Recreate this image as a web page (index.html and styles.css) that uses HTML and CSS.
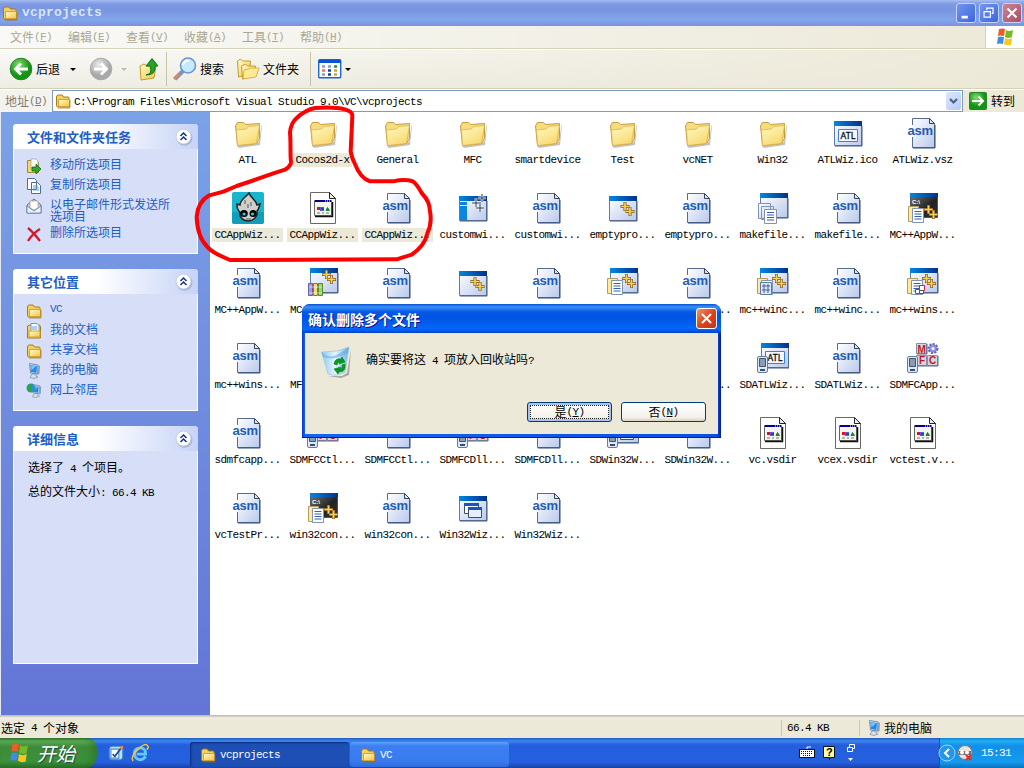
FILE: index.html
```html
<!DOCTYPE html>
<html lang="zh-CN">
<head>
<meta charset="utf-8">
<title>vcprojects</title>
<link rel="stylesheet" href="styles.css">
</head>
<body>
<svg class="defs" width="0" height="0">
<defs>
<linearGradient id="gy" x1="0" y1="0" x2="1" y2="1"><stop offset="0" stop-color="#fffbd0"/><stop offset="1" stop-color="#f0c540"/></linearGradient>
<linearGradient id="gf" x1="0" y1="0" x2=".6" y2="1"><stop offset="0" stop-color="#fffbc8"/><stop offset="1" stop-color="#f8d970"/></linearGradient>
<linearGradient id="gw" x1="0" y1="0" x2="1" y2="1"><stop offset="0" stop-color="#fff"/><stop offset="1" stop-color="#b9c9ec"/></linearGradient>
<linearGradient id="gt"><stop offset="0" stop-color="#0088e0"/><stop offset="1" stop-color="#00308c"/></linearGradient>
<linearGradient id="gc" x1="0" y1="0" x2="1" y2="1"><stop offset="0" stop-color="#777"/><stop offset=".6" stop-color="#222"/><stop offset="1" stop-color="#333"/></linearGradient>
<linearGradient id="gb" x1="0" y1="0" x2="1" y2="0"><stop offset="0" stop-color="#8ac8f4"/><stop offset=".5" stop-color="#e4f6ff"/><stop offset="1" stop-color="#6fb2e4"/></linearGradient>
<radialGradient id="gg" cx=".4" cy=".3"><stop offset="0" stop-color="#86dc70"/><stop offset="1" stop-color="#149414"/></radialGradient>
<radialGradient id="gs" cx=".4" cy=".3"><stop offset="0" stop-color="#ececec"/><stop offset="1" stop-color="#a8a8a8"/></radialGradient>
<symbol id="folder" viewBox="0 0 32 32"><path d="M5 29l22-4 2.500-17 .5 1-2 19-21 3z" fill="#777" opacity=".45"/><path d="M3.500 9l2-3.500h6l2 2 14-1v15l-3 5-19 2z" fill="#f5dc7c" stroke="#c79c3e"/><path d="M4.500 13l10-1 2-2.500 11-1-3 18-19 2z" fill="url(#gf)" stroke="#dcae45" stroke-width=".7"/></symbol>
<symbol id="asm" viewBox="0 0 32 32"><path d="M5.500 1.500h17l5 5v24h-22z" fill="url(#gw)" stroke="#566b8d"/><path d="M6 31h22V8" fill="none" stroke="#344d7a"/><path d="M22.500 1.500v5h5z" fill="#dce5f5" stroke="#344460"/><path d="M5.500 8v12" stroke="#fff"/><text x=".5" y="18" class="asm-text" textLength="25.500">asm</text></symbol>
<symbol id="frame" viewBox="0 0 32 32"><path d="M2.500 4.500h27v24h-27z" fill="url(#gw)" stroke="#647b9d"/><path d="M2 4h28v5H2z" fill="url(#gt)"/><path d="M3 29h27V9" fill="none" stroke="#425b84"/></symbol>
<symbol id="plus" viewBox="0 0 16 16"><path d="M5.500 1v9M1 5.500h9M10.500 6v9M6 10.500h9" stroke="#80571a" stroke-width="3"/><path d="M5.500 1.500v8M1.500 5.500h8M10.500 6.500v8M6.500 10.500h8" stroke="#f9cf55" stroke-width="1.700"/></symbol>
<symbol id="page" viewBox="0 0 16 18"><path d="M.5.5h10v15H.5z" fill="#ffe99c" stroke="#b39d61"/><path d="M4.500 2.500h11v14h-11z" fill="#fff" stroke="#8094b2"/><path d="M6.500 5.500h7m-7 2.500h7m-7 2.500h7m-7 2.500h7" stroke="#325fb0"/></symbol>
<symbol id="win" viewBox="0 0 32 32"><use href="#frame"/><use href="#plus" x="12.500" y="9" width="16" height="16"/></symbol>
<symbol id="custom" viewBox="0 0 32 32"><use href="#frame"/><path d="M3 10h7v3H3zm0 4h7v14H3z" fill="#0786e6"/><path d="M19 6v9m-4-4h9M25 2v8m-4-4h8m-6 6v8m-4-4h8" stroke="#fff" stroke-width="2.500"/><path d="M19 6v9m-4-4h9M25 2v8m-4-4h8m-6 6v8m-4-4h8" stroke="#283650"/></symbol>
<symbol id="atl" viewBox="0 0 32 32"><use href="#frame"/><path d="M6.500 12.500h19v12h-19z" fill="#f5f9ff" stroke="#3681e4"/><text x="8.500" y="22" class="atl-text" textLength="15">ATL</text></symbol>
<symbol id="make" viewBox="0 0 32 32"><use href="#frame" x="1" y="-3"/><path d="M1.500 11.500h12v15h-12zm3 3h12v13h-12z" fill="url(#gw)" stroke="#8094b2"/><path d="M7.500 17.500h12v14h-12z" fill="#fff" stroke="#8094b2"/><path d="M10 20.500h7m-7 2.500h7m-7 2.500h7m-7 2.500h7" stroke="#325fb0"/></symbol>
<symbol id="console" viewBox="0 0 32 32"><path d="M3.500 1.500h27v24h-27z" fill="url(#gc)" stroke="#555"/><path d="M3 1h28v4H3z" fill="url(#gt)"/><text x="5" y="12" class="tiny-text">C:\</text><use href="#plus" x="16" y="12" width="16" height="16"/><use href="#page" x="1" y="14" width="16" height="18"/></symbol>
<symbol id="docs" viewBox="0 0 32 32"><use href="#frame" x="1" y="-3"/><use href="#plus" x="14" y="6" width="16" height="16"/><use href="#page" x="0" y="11" width="16" height="18"/></symbol>
<symbol id="form" viewBox="0 0 32 32"><use href="#docs"/><path d="M3.500 15.500h11v12h-11z" fill="#dce7fa" stroke="#61799e"/><path d="M5 19h8M5 23h8M7 17v9m4-9v9" stroke="#426394"/></symbol>
<symbol id="service" viewBox="0 0 32 32"><use href="#docs"/><path d="M12.500 18.500h5v5h-5z" fill="#fff" stroke="#d02040"/><path d="M8.500 22.500h4v4h-4z" fill="#fff" stroke="#208430"/><path d="M12.500 23.500h4v3h-4z" fill="#fff" stroke="#555"/></symbol>
<symbol id="books" viewBox="0 0 32 32"><use href="#frame" x="1" y="-3"/><use href="#plus" x="14" y="2" width="16" height="16"/><path d="M1.500 16.500h4v12h-4z" fill="#a79bdd" stroke="#6b5d9e"/><path d="M6.500 16.500h4v12h-4z" fill="#f7d875" stroke="#92742c"/><path d="M11.500 16.500h4v12h-4z" fill="#97d667" stroke="#548b32"/><path d="M2 20h13M2 26h13" stroke="#fff" opacity=".6"/></symbol>
<symbol id="phone" viewBox="0 0 12 18"><rect x=".5" y=".5" width="10" height="16" rx="1.500" fill="#dfe8f6" stroke="#657d9c"/><path d="M2.500 2.500h6v8h-6z" fill="#879cb5" stroke="#46546a"/><path d="M3 14h5" stroke="#384f72" stroke-width="2"/></symbol>
<symbol id="sdatl" viewBox="0 0 32 32"><use href="#atl" x="2" y="-3"/><use href="#phone" x="0" y="14" width="12" height="18"/></symbol>
<symbol id="mfc" viewBox="0 0 32 32"><path d="M9.500 1.500h10v10h-10zm0 12h10v10h-10zm11 0h10v10h-10z" fill="#d3d8e2" stroke="#8290a8"/><path d="M10 12h10V2M10 24h21V14" fill="none" stroke="#5c6983"/><g class="mfc-text"><text x="10.500" y="10.500">M</text><text x="12" y="22">F</text><text x="22" y="22">C</text></g><circle cx="26" cy="6.500" r="4" fill="#8d91df" stroke="#6568bd" stroke-width="3" stroke-dasharray="2 1"/><circle cx="26" cy="6.500" r="3.500" fill="#8d91df"/><circle cx="26" cy="6.500" r="1.500" fill="#fff"/><use href="#phone" x="0" y="14" width="12" height="18"/></symbol>
<symbol id="windows" viewBox="0 0 32 32"><use href="#frame"/><path d="M7.500 11.500h14v10h-14z" fill="#fff" stroke="#365174"/><path d="M7 11h15v3H7z" fill="#1555bd"/><path d="M11.500 15.500h13v10h-13z" fill="#e7effb" stroke="#365174"/><path d="M11 15h14v3H11z" fill="#1555bd"/></symbol>
<symbol id="sdwin" viewBox="0 0 32 32"><use href="#windows" x="2" y="-3"/><use href="#phone" x="0" y="14" width="12" height="18"/></symbol>
<symbol id="vsdir" viewBox="0 0 32 32"><path d="M3.500.5h19l6 6v25h-25z" fill="#fff" stroke="#6a6a65"/><path d="M22.500.5v6h6z" fill="#eee" stroke="#222"/><path d="M7.500 8.500h17v15h-17z" fill="#f4f3ee" stroke="#666"/><path d="M8 8h16v2H8z" fill="#000090"/><path d="M18 9h1m1 0h1m1 0h1" stroke="#fff"/><path d="M8 24.500h17.500V10" fill="none" stroke="#111" stroke-width="1.500"/><rect x="10" y="15" width="3" height="3" fill="#e01020"/><path d="M14 15v4m0-2h3m-1-2v4" stroke="#1535d0" stroke-width="1.500"/><path d="M19 18.500l1.500-3 2 3z" fill="#0a8b35" stroke="#0a8b35"/><path d="M10 21h3m2 0h2m2 0h3" stroke="#777"/></symbol>
<symbol id="cocos" viewBox="0 0 32 32"><rect width="32" height="32" rx="2" fill="#18b5cc"/><path d="M0 20h32v10q0 2-2 2H2q-2 0-2-2z" fill="#0f8fae" opacity=".6"/><path d="M17 1c1 4 7 7 8 12l3-1c-1 3-1 5-3 7 1 6-4 10-9 10s-9-4-8-9c-3-2-3-5-3-8l3 1C8 8 13 6 17 1z" fill="#cfcfcb" stroke="#222" stroke-width="1.500"/><ellipse cx="12" cy="21.500" rx="3.800" ry="3.500"/><ellipse cx="21" cy="21.500" rx="3.500" ry="3.500"/><circle cx="12" cy="22" r="1.600" fill="#19d3dc"/><circle cx="20.500" cy="22" r="1.600" fill="#19d3dc"/><path d="M14 27h5m-6-19v4m6-2v4m-3-2v4" stroke="#555"/></symbol>
<symbol id="sfolder" viewBox="0 0 16 16"><path d="M1.500 4q0-2 2-2h3.500l1.500 2h4.500q1 0 1 1v9H3q-1.500 0-1.500-1.500z" fill="#f7d15b" stroke="#a77a17"/><path d="M3.500 6.500h11v7h-11z" fill="url(#gy)" stroke="#d8a32e"/><path d="M3 15h12V7" fill="none" stroke="#8e6a22" stroke-width=".7"/></symbol>
<symbol id="pc" viewBox="0 0 16 16"><path d="M3.500.5l8.500 1.500-.5 9-7-1z" fill="#dce7f8" stroke="#788cae"/><path d="M4.500 2l6.500 1-.5 7-5.500-1z" fill="#1e8cec"/><path d="M5 2.500l5 .8-4.500 4z" fill="#7cc4fb"/><path d="M12 2l2 1-.5 8-2 1" fill="#8f9fba"/><path d="M6 11h4v2l2 1-4 1.500-4-1z" fill="#d8dfec" stroke="#77869e" stroke-width=".7"/></symbol>
<symbol id="flag" viewBox="0 0 20 18"><path d="M4 1q3-1 6 0L9 8q-3-1-6 0z" fill="#ef5b24"/><path d="M11 2q3 2 7 0l-1 7q-4 2-7 0z" fill="#76bb25"/><path d="M3 9q3-1 6 0l-1 7q-3-1-6 0z" fill="#3f8de0"/><path d="M10 10q3 2 7 0l-1 7q-4 1-7-1z" fill="#fac722"/></symbol>
<symbol id="chev" viewBox="0 0 20 20"><circle cx="10.500" cy="10.800" r="8" fill="#9aa6c8" opacity=".7"/><circle cx="9.500" cy="9.500" r="7.500" fill="#fff" stroke="#c3cde6"/><path d="M6.500 9l3-3 3 3m-6 4l3-3 3 3" fill="none" stroke="#15317e" stroke-width="1.500"/></symbol>
</defs>
</svg>

<div class="screen">
<header class="titlebar"><svg class="i16"><use href="#sfolder"/></svg><h1>vcprojects</h1>
<div class="winbtns">
<svg class="wb" viewBox="0 0 20 20"><path d="M5 14.500h7" stroke="#fff" stroke-width="3"/></svg>
<svg class="wb" viewBox="0 0 20 20"><path d="M7.500 7V4.500h7v6H13M4.500 8.500h7v6h-7zM4 8.500h8M7 4.500h8" fill="none" stroke="#fff" stroke-width="1.300"/></svg>
<svg class="wb x" viewBox="0 0 20 20"><path d="M5 5l10 10M15 5L5 15" stroke="#fff" stroke-width="2.300"/></svg>
</div></header>
<nav class="menubar"><span>文件<i>(<u>F</u>)</i></span><span>编辑<i>(<u>E</u>)</i></span><span>查看<i>(<u>V</u>)</i></span><span>收藏<i>(<u>A</u>)</i></span><span>工具<i>(<u>T</u>)</i></span><span>帮助<i>(<u>H</u>)</i></span><div class="brand"><svg width="20" height="18"><use href="#flag"/></svg></div></nav>
<div class="toolbar">
<svg class="back" viewBox="0 0 24 24"><circle cx="12" cy="12" r="10.800" fill="url(#gg)" stroke="#27842a"/><path d="M19 12H7m5-5.500L6.500 12l5.500 5.500" fill="none" stroke="#fff" stroke-width="2.800"/></svg><span class="t1">后退</span><b class="arr"></b>
<svg class="fwd" viewBox="0 0 24 24"><circle cx="12" cy="12" r="10.800" fill="url(#gs)" stroke="#aaa"/><path d="M5 12h12m-5-5.500l5.500 5.500-5.500 5.500" fill="none" stroke="#fff" stroke-width="2.800"/></svg><b class="arr off"></b>
<svg class="up" viewBox="0 0 20 24"><path d="M1 9l4-2 3 2 9 0-2 12-13 2z" fill="url(#gy)" stroke="#c59b31"/><path d="M7 18q7-1 4-9H7L13 1.500 19 9h-3q1 9-9 9z" fill="#26a326" stroke="#0c7414"/></svg>
<hr>
<svg class="search" viewBox="0 0 24 24"><path d="M2 22l8-8" stroke="#8490b5" stroke-width="4"/><path d="M1 22l5-5" stroke="#d68a62" stroke-width="3"/><circle cx="15" cy="8.500" r="7.500" fill="#c3eaff" stroke="#6e94d1" stroke-width="1.600"/><path d="M10 8q1-5 6-4" stroke="#fff" stroke-width="2" fill="none"/></svg><span class="t2">搜索</span>
<svg class="folders" viewBox="0 0 24 24"><path d="M1.500 4l3-2 2 2h8l-1 13-11 3z" fill="url(#gy)" stroke="#c59b31"/><path d="M5.500 9l4-2 2 2h8v10l-13 3z" fill="url(#gy)" stroke="#c59b31"/><path d="M8 13l5-1 1-1h9l-3 9-13 2z" fill="#ffe991" stroke="#d0a53d" stroke-width=".8"/></svg><span class="t3">文件夹</span>
<hr>
<svg class="views" viewBox="0 0 24 20"><rect x=".7" y=".7" width="22" height="18" rx="1" fill="#fff" stroke="#1668ce" stroke-width="1.400"/><path d="M1 1h22v3H1z" fill="#0755d5"/><g stroke-width="2.500"><path d="M4 7.500h3" stroke="#8c9bd9"/><path d="M10 7.500h3M4 15.500h3" stroke="#859bdd"/><path d="M16 7.500h3" stroke="#2a913a"/><path d="M4 11.500h3" stroke="#f1724b"/><path d="M10 11.500h3m-3 4h3" stroke="#1042b1"/><path d="M16 11.500h3m-3 4h3" stroke="#c5a53b"/></g></svg><b class="arr v"></b>
</div>
<div class="address"><span class="albl">地址<i>(<u>D</u>)</i></span><div class="abox"><svg class="i16"><use href="#sfolder"/></svg><span class="mono">C:\Program Files\Microsoft Visual Studio 9.0\VC\vcprojects</span><svg class="drop" viewBox="0 0 15 18"><path d="M4 7l3.500 3.500L11 7" fill="none" stroke="#4d6185" stroke-width="2.200"/></svg></div><svg class="go" viewBox="0 0 18 18"><rect x=".5" y=".5" width="17" height="17" rx="1" fill="url(#gg)" stroke="#248430"/><path d="M3 9h11M9.500 4.500L14 9l-4.500 4.500" fill="none" stroke="#fff" stroke-width="2"/></svg><span>转到</span></div>

<div class="main">
<aside>
<section class="box b1"><h2>文件和文件夹任务<svg><use href="#chev"/></svg></h2><ul>
<li><svg viewBox="0 0 16 16"><path d="M1.500 2.500h5l1 2h5v10h-11z" fill="#f4d671" stroke="#a98733"/><path d="M5 1h5l2 2v7H5z" fill="#fff" stroke="#9a9a9a" stroke-width=".7"/><path d="M6 9h4V6l5 5-5 5v-3H6z" fill="#36a52e" stroke="#116519" stroke-width=".8"/></svg>移动所选项目</li>
<li><svg viewBox="0 0 16 16"><path d="M1.500.5h7l2 2v9h-9zM5.500 4.500h6l3 3v8h-9z" fill="#fff" stroke="#536b99"/><path d="M7 8h5m-5 2h6m-6 2h6" stroke="#5c9fe0"/></svg>复制所选项目</li>
<li class="two"><svg viewBox="0 0 16 16"><path d="M1 7l7-6 7 6v8H1z" fill="#b8cdef" stroke="#5875a7"/><path d="M4 3h8v7l-4 2-4-2z" fill="#fff" stroke="#c99a74" stroke-width=".8"/><path d="M1 8l7 5 7-5v7H1z" fill="#e9f2ff" stroke="#6681ad" stroke-width=".8"/></svg><span>以电子邮件形式发送所<br>选项目</span></li>
<li><svg viewBox="0 0 16 16"><path d="M2 2q5 4 12 13M14 3Q7 7 2 15" fill="none" stroke="#d31832" stroke-width="2.300"/></svg>删除所选项目</li></ul></section>
<section class="box b2"><h2>其它位置<svg><use href="#chev"/></svg></h2><ul>
<li><svg><use href="#sfolder"/></svg><i>VC</i></li>
<li><svg viewBox="0 0 16 16"><path d="M1.500 3l2-1h10l1 2v11h-13z" fill="#f7d15b" stroke="#a77a17"/><path d="M5 .5h6l2 2V9H5z" fill="#fff" stroke="#679bd9"/><path d="M6 4h5M6 6h5" stroke="#59a3e3"/><path d="M3 8h11v6H3z" fill="url(#gy)" stroke="#d2a138"/></svg>我的文档</li>
<li><svg><use href="#sfolder"/></svg>共享文档</li>
<li><svg><use href="#pc"/></svg>我的电脑</li>
<li><svg viewBox="0 0 16 16"><use href="#pc" x="3" width="14" height="16"/><circle cx="5" cy="5" r="4.500" fill="#2c8ed7"/><path d="M1 4q3-5 6-2L5 5l2 3-3 1q-3-2-3-5z" fill="#2fa437"/></svg>网上邻居</li></ul></section>
<section class="box b3"><h2>详细信息<svg><use href="#chev"/></svg></h2><p>选择了<i> 4 </i>个项目。</p><p>总的文件大小<i>: 66.4 KB</i></p></section>
</aside>
<div class="files">
<figure><svg><use href="#folder"/></svg><figcaption>ATL</figcaption></figure>
<figure class="sel"><svg><use href="#folder"/></svg><figcaption>Cocos2d-x</figcaption></figure>
<figure><svg><use href="#folder"/></svg><figcaption>General</figcaption></figure>
<figure><svg><use href="#folder"/></svg><figcaption>MFC</figcaption></figure>
<figure><svg><use href="#folder"/></svg><figcaption>smartdevice</figcaption></figure>
<figure><svg><use href="#folder"/></svg><figcaption>Test</figcaption></figure>
<figure><svg><use href="#folder"/></svg><figcaption>vcNET</figcaption></figure>
<figure><svg><use href="#folder"/></svg><figcaption>Win32</figcaption></figure>
<figure><svg><use href="#atl"/></svg><figcaption>ATLWiz.ico</figcaption></figure>
<figure><svg><use href="#asm"/></svg><figcaption>ATLWiz.vsz</figcaption></figure>
<figure class="sel"><svg><use href="#cocos"/></svg><figcaption>CCAppWiz...</figcaption></figure>
<figure class="sel"><svg><use href="#vsdir"/></svg><figcaption>CCAppWiz...</figcaption></figure>
<figure class="sel"><svg><use href="#asm"/></svg><figcaption>CCAppWiz...</figcaption></figure>
<figure><svg><use href="#custom"/></svg><figcaption>customwi...</figcaption></figure>
<figure><svg><use href="#asm"/></svg><figcaption>customwi...</figcaption></figure>
<figure><svg><use href="#win"/></svg><figcaption>emptypro...</figcaption></figure>
<figure><svg><use href="#asm"/></svg><figcaption>emptypro...</figcaption></figure>
<figure><svg><use href="#make"/></svg><figcaption>makefile...</figcaption></figure>
<figure><svg><use href="#asm"/></svg><figcaption>makefile...</figcaption></figure>
<figure><svg><use href="#console"/></svg><figcaption>MC++AppW...</figcaption></figure>
<figure><svg><use href="#asm"/></svg><figcaption>MC++AppW...</figcaption></figure>
<figure class="cut"><svg><use href="#books"/></svg><figcaption>MC</figcaption></figure>
<figure><svg><use href="#asm"/></svg></figure>
<figure><svg><use href="#win"/></svg></figure>
<figure><svg><use href="#asm"/></svg></figure>
<figure><svg><use href="#docs"/></svg></figure>
<figure class="dots"><svg><use href="#asm"/></svg><figcaption>...</figcaption></figure>
<figure><svg><use href="#form"/></svg><figcaption>mc++winc...</figcaption></figure>
<figure><svg><use href="#asm"/></svg><figcaption>mc++winc...</figcaption></figure>
<figure><svg><use href="#service"/></svg><figcaption>mc++wins...</figcaption></figure>
<figure><svg><use href="#asm"/></svg><figcaption>mc++wins...</figcaption></figure>
<figure class="cut"><svg></svg><figcaption>MF</figcaption></figure>
<figure></figure>
<figure></figure>
<figure></figure>
<figure></figure>
<figure class="dots"><svg></svg><figcaption>...</figcaption></figure>
<figure><svg><use href="#sdatl"/></svg><figcaption>SDATLWiz...</figcaption></figure>
<figure><svg><use href="#asm"/></svg><figcaption>SDATLWiz...</figcaption></figure>
<figure><svg><use href="#mfc"/></svg><figcaption>SDMFCApp...</figcaption></figure>
<figure><svg><use href="#asm"/></svg><figcaption>sdmfcapp...</figcaption></figure>
<figure><svg><use href="#mfc"/></svg><figcaption>SDMFCCtl...</figcaption></figure>
<figure><svg><use href="#asm"/></svg><figcaption>SDMFCCtl...</figcaption></figure>
<figure><svg><use href="#mfc"/></svg><figcaption>SDMFCDll...</figcaption></figure>
<figure><svg><use href="#asm"/></svg><figcaption>SDMFCDll...</figcaption></figure>
<figure><svg><use href="#sdwin"/></svg><figcaption>SDWin32W...</figcaption></figure>
<figure><svg><use href="#asm"/></svg><figcaption>SDWin32W...</figcaption></figure>
<figure><svg><use href="#vsdir"/></svg><figcaption>vc.vsdir</figcaption></figure>
<figure><svg><use href="#vsdir"/></svg><figcaption>vcex.vsdir</figcaption></figure>
<figure><svg><use href="#vsdir"/></svg><figcaption>vctest.v...</figcaption></figure>
<figure><svg><use href="#asm"/></svg><figcaption>vcTestPr...</figcaption></figure>
<figure><svg><use href="#console"/></svg><figcaption>win32con...</figcaption></figure>
<figure><svg><use href="#asm"/></svg><figcaption>win32con...</figcaption></figure>
<figure><svg><use href="#windows"/></svg><figcaption>Win32Wiz...</figcaption></figure>
<figure><svg><use href="#asm"/></svg><figcaption>Win32Wiz...</figcaption></figure>
</div>
</div>
<footer class="status"><span class="s1">选定<i> 4 </i>个对象</span><span class="s2"><i>66.4 KB</i></span><span class="s3"><svg class="i16"><use href="#pc"/></svg>我的电脑</span></footer>
<div class="taskbar">
<div class="start"><svg width="22" height="20"><use href="#flag"/></svg><em>开始</em></div>
<svg class="ql" viewBox="0 0 16 16"><rect x="2" y="2" width="12" height="12" rx="3" fill="#b8e2fb" stroke="#3c87c9"/><path d="M3.500 4.500h7v8h-7z" fill="#fff" stroke="#4f8cca"/><path d="M5 9l2 2 6-8" fill="none" stroke="#17539d" stroke-width="1.500"/><circle cx="13" cy="3" r="1.500" fill="#f38c3c"/></svg>
<svg class="ql" viewBox="0 0 16 16"><path d="M13 11q-2 3-5.500 3Q3 13 3 8.500T8 3.500q5 0 5 5.500H5" fill="none" stroke="#63c8fa" stroke-width="2.500"/><path d="M2 15Q-1 12 6 5t9-3q1 1-1 3" fill="none" stroke="#f4c838" stroke-width="1.300"/></svg>
<div class="tb on"><svg class="i16"><use href="#sfolder"/></svg><span>vcprojects</span></div><div class="tb"><svg class="i16"><use href="#sfolder"/></svg><span>VC</span></div>
<div class="lang">
<svg width="16" height="16" viewBox="0 0 16 16"><path d="M8 4V2h4" stroke="#fff" fill="none"/><rect x=".5" y="4.500" width="15" height="8" fill="#fff" stroke="#111"/><path d="M2 6.500h12M2 8.500h12M4 10.500h8" stroke="#111" stroke-dasharray="1 1"/></svg>
<svg width="14" height="16" viewBox="0 0 14 16"><path d="M1.500 1.500h11v11h-4l-1 2v-2h-6z" fill="#ffffa0" stroke="#111"/><text x="4" y="11" class="q-text">?</text></svg>
<svg class="opt" width="10" height="18" viewBox="0 0 10 18"><path d="M3.500 3V.5h5v4H6M1.500 3.500h5v4h-5z" fill="none" stroke="#fff"/><path d="M2 14h5l-2.500 3z" fill="#fff"/></svg></div>
<div class="tray"><svg class="tchev" viewBox="0 0 18 18"><circle cx="9" cy="9" r="8" fill="#2196ed" stroke="#9bd7ff"/><path d="M11 5L7 9l4 4" fill="none" stroke="#fff" stroke-width="2"/></svg><svg class="i16" viewBox="0 0 16 16"><circle cx="8" cy="7.500" r="7" fill="#e7e5e2" stroke="#9a6f60"/><path d="M2 6h12v4H2z" fill="#74707e"/><circle cx="5" cy="7.500" r="2" fill="#fff"/><circle cx="10" cy="7.500" r="2" fill="#fff"/><path d="M9 10l5 5m0-5l-5 5" stroke="#db3028" stroke-width="2"/></svg><span>15:31</span></div>
</div>

<svg class="marker" viewBox="0 0 1024 768"><path transform="translate(190 100) scale(.33333)" d="M303 186C300 165 303 130 300 98C302 75 309 63 320 54C335 40 352 28 375 24C405 22 440 22 465 28C482 33 488 39 487 48L482 155Q486 175 494 190C506 222 522 238 540 244L610 244Q640 237 666 243C675 247 683 257 695 279C715 300 719 315 720 335C724 355 724 375 712 400C706 430 688 448 665 464Q642 471 620 478L120 480C95 470 65 457 52 440C25 415 21 380 20 350C22 325 30 302 58 286L100 275L140 258L185 243L250 220L285 209Q296 204 302 192"/></svg>

<div class="dialog"><div class="dtitle"><span>确认删除多个文件</span><svg viewBox="0 0 21 21"><path d="M5.500 5.500l10 10m0-10l-10 10" stroke="#fff" stroke-width="2.300"/></svg></div>
<div class="dbody"><div class="msg"><svg viewBox="0 0 32 32"><path d="M8 30h14l5-3 4-23-2 25-8 3z" fill="#777" opacity=".55"/><path d="M1.500 6L17 5l12-4-4 25q-8 5-17 2z" fill="url(#gb)" stroke="#a5cbe2" stroke-width=".8"/><path d="M1.500 6q7 7 15 3T29 1l-1 6q-6 4-13 5T3 11z" fill="#5aa9e2" opacity=".55"/><path d="M14 18q1-6 7-5l1-2 3 5-6 2 1-2q-3 0-3 3zm11 0q1 8-6 8l-1 2-4-5 7-2-1 2q3 0 2-4z" fill="#0d9422" stroke="#0d9422" stroke-width=".8"/></svg><span>确实要将这<i> 4 </i>项放入回收站吗<i>?</i></span></div>
<div class="btns"><button class="def">是<i>(<u>Y</u>)</i></button><button>否<i>(<u>N</u>)</i></button></div></div></div>
</div>
</body>
</html>
```
FILE: styles.css
```css
* { box-sizing: border-box; }
body { margin: 0; font: 12px/14px "Noto Sans CJK SC", sans-serif; color: #000; overflow: hidden; }
button { font-family: "Noto Sans CJK SC", sans-serif; }
svg { flex: none; display: block; }
.defs { position: absolute; }
i, .mono, figcaption, h1, .tb span, .tray span { font: normal 11px/14px "Liberation Mono", monospace; letter-spacing: -0.6px; white-space: pre; }
u { text-underline-offset: 1px; }
.i16 { width: 16px; height: 16px; }
.asm-text { font: bold 13px "Liberation Sans", sans-serif; fill: #1d5eb5; }
.atl-text { font: 9px "Noto Sans", sans-serif; fill: #111; stroke: #111; stroke-width: .3px; }
.tiny-text { font: bold 6px "Liberation Sans", sans-serif; fill: #fff; }
.mfc-text { font: bold 10px "Liberation Sans", sans-serif; fill: #c31829; }
.q-text { font: bold 11px "Liberation Sans", sans-serif; fill: #000; }
.screen { position: relative; width: 1024px; height: 768px; display: flex; flex-direction: column; overflow: hidden; background: #fff; }

.titlebar { height: 26px; flex: none; display: flex; align-items: center; padding: 0 2px; background: linear-gradient(#a6bdf0 0, #7d99e3 4px, #7896df 10px, #82a5ea 20px, #7c91de 26px); }
.titlebar h1 { margin: 0 0 0 4px; font-weight: bold; font-size: 13px; letter-spacing: .2px; color: #d8e4f8; }
.winbtns { margin-left: auto; display: flex; gap: 3px; }
.wb { width: 20px; height: 20px; border: 1px solid #c5d3f5; border-radius: 3px; background: linear-gradient(135deg, #7495ee, #3b66df); }
.wb.x { background: linear-gradient(135deg, #cb8593, #a94e66); }
.menubar { height: 23px; flex: none; display: flex; align-items: center; gap: 16px; padding-left: 10px; color: #aaa794; background: linear-gradient(90deg, #f9f9f7, #ece9d8); border-bottom: 1px solid #d5d0b8; }
.menubar span, .albl { display: flex; align-items: center; width: 42px; flex: none; white-space: nowrap; }
.brand { margin-left: auto; width: 39px; height: 22px; background: #fff; border-left: 1px solid #d5d0b8; padding: 2px 0 0 9px; }
.toolbar { height: 40px; flex: none; display: flex; align-items: center; padding-left: 9px; background: linear-gradient(90deg, transparent, #ece9d8), linear-gradient(#fafaf8, #eeede4); border-top: 1px solid #fff; border-bottom: 1px solid #d5d0b8; }
.toolbar hr { width: 1px; height: 34px; margin: 0; border: 0; background: #c9c3aa; flex: none; }
.toolbar span { white-space: nowrap; }
.arr { width: 0; height: 0; border: 3px solid transparent; border-top-color: #000; border-bottom: 0; flex: none; }
.arr.off { border-top-color: #bbb; margin: 0 12px 0 8px; }
.back, .fwd, .search, .folders, .views { width: 24px; height: 24px; }
.t1 { width: 24px; margin: 0 10px 0 3px; }
.fwd { margin-left: 13px; }
.up { width: 20px; height: 24px; margin-right: 7px; }
.search { margin-left: 6px; }
.t2 { width: 24px; margin: 0 12px 0 3px; }
.t3 { width: 36px; margin: 0 11px 0 3px; }
.views { height: 20px; margin: 0 3px 0 7px; }
.address { height: 23px; flex: none; display: flex; align-items: center; padding-left: 5px; background: linear-gradient(90deg, #f4f3ee, #ece9d8); border-top: 1px solid #fff; }
.albl { color: #7f7c73; width: 47px; }
.abox { width: 911px; height: 22px; display: flex; align-items: center; background: #fff; border: 1px solid #7f9db9; padding: 0 1px 0 2px; }
.abox .mono { margin-left: 3px; padding-top: 2px; }
.drop { margin-left: auto; width: 15px; height: 18px; background: linear-gradient(135deg, #dce7fe, #b5cbf6); border-radius: 2px; }
.go { width: 18px; height: 18px; margin: 0 4px 0 6px; }

.main { height: 603px; flex: none; display: flex; }
aside { width: 210px; padding: 12px 12px 0; border-left: 1px solid #e4e8f0; background: linear-gradient(#7ba2e7, #6375d6); display: flex; flex-direction: column; gap: 15px; }
.box { width: 185px; background: #d6dff7; border: 1px solid #fff; border-top: 0; border-radius: 4px 4px 0 0; }
.b1 { height: 130px; }
.b2 { height: 142px; }
.b3 { height: 238px; }
.box h2 { margin: 0 -1px; height: 25px; display: flex; align-items: center; justify-content: space-between; padding: 0 4px 0 14px; font: bold 13px/14px "Noto Sans CJK SC", sans-serif; color: #215dc6; border-radius: 4px 4px 0 0; background: linear-gradient(90deg, #fff 45%, #c6d3f7); }
.box h2 svg { width: 20px; height: 20px; }
.box ul { list-style: none; margin: 0; padding: 5px 0 0 12px; color: #215dc6; }
.box li { height: 20px; display: flex; align-items: center; gap: 8px; white-space: nowrap; }
.box li svg { width: 16px; height: 16px; position: relative; top: 2px; }
.box li.two { height: 28px; line-height: 12px; align-items: flex-start; }
.box li.two svg { margin-top: 2px; }
.box li.two span { margin-top: 4px; }
.box p { margin: 10px 0 0 14px; height: 14px; }
.b3 p:nth-of-type(1) { margin-top: 9px; }
.files { flex: 1; display: grid; grid-template-columns: repeat(10, 75px); grid-auto-rows: 75px; align-content: start; padding: 5px 0 0 0; background: #fff; }
figure { margin: 0; display: flex; flex-direction: column; align-items: center; }
figure svg { width: 32px; height: 32px; }
figcaption { margin-top: 4px; height: 14px; padding: 0 2px; white-space: nowrap; }
.sel figcaption { background: #ece9d8; }
.cut figcaption { align-self: flex-start; padding-left: 5px; }
.dots figcaption { align-self: flex-end; padding-right: 4px; }

.status { height: 23px; flex: none; display: flex; align-items: center; background: linear-gradient(#b9b5a5, #f2f0e5 3px, #ece9d8 5px); padding: 3px 0 0 1px; }
.status span { white-space: nowrap; display: flex; align-items: center; }
.status .s1 { width: 780px; }
.status .s2 { width: 78px; height: 16px; padding-left: 5px; border-left: 1px solid #c9c5b2; }
.status .s3 { height: 16px; padding-left: 6px; border-left: 1px solid #c9c5b2; gap: 2px; }
.taskbar { height: 30px; flex: none; display: flex; align-items: center; background: linear-gradient(#1f5bc4, #3c87f0 3px, #245edc 7px, #2561df 24px, #1941a5); color: #fff; }
.start { width: 97px; height: 30px; display: flex; align-items: center; padding-left: 8px; gap: 7px; background: linear-gradient(#2d722d, #5eac56 3px, #3c8b3a 9px, #3b9139 24px, #286f28); border-radius: 0 10px 12px 0; box-shadow: inset -5px 0 6px #20652066; margin-right: 10px; }
.start em { font-size: 19px; text-shadow: 1px 1px 1px #244; white-space: nowrap; }
.ql { width: 18px; height: 18px; margin-right: 6px; }
.ql + .ql { margin-right: 41px; }
.tb { width: 159px; height: 25px; margin: 3px 1px 0 0; padding-left: 10px; display: flex; align-items: center; gap: 4px; border-radius: 3px; background: linear-gradient(#62a0fa, #3b7ff3 4px, #387bee 20px, #3069da); }
.tb.on { background: #1d4fb5; box-shadow: inset 1px 1px 2px #0c2c78; }
.lang { margin-left: auto; display: flex; align-items: center; gap: 8px; margin-right: 83px; }
.lang svg:first-child { margin-right: -1px; }
.lang .opt { margin-left: 2px; }
.tray { width: 85px; height: 30px; display: flex; align-items: center; background: linear-gradient(#1582c8, #22aff5 3px, #128fe9 8px, #149bed 24px, #0c6fbd); border-left: 1px solid #0a59ab; gap: 1px; }
.tchev { width: 18px; height: 18px; margin-left: -2px; }
.tray span { margin-left: 7px; }
.marker { position: absolute; inset: 0; width: 1024px; height: 768px; pointer-events: none; }
.marker path { fill: none; stroke: #f00; stroke-width: 12; stroke-linejoin: round; stroke-linecap: round; }

.dialog { position: absolute; left: 302px; top: 304px; width: 419px; height: 134px; border-radius: 8px 8px 0 0; background: linear-gradient(90deg, #0831d9, #1664f0 3px, #0a4fe0 415px, #001d98); padding: 0 3px 3px; border-bottom: 1px solid #001d98; }
.dtitle { height: 29px; margin: 0 -3px; padding: 0 4px 0 6px; display: flex; align-items: center; justify-content: space-between; border-radius: 8px 8px 0 0; background: linear-gradient(#0a50d2, #3b92fa 3px, #0557e4 8px, #0054e3 14px, #0467fc 25px, #0242c4); color: #fff; font-weight: bold; font-size: 14px; text-shadow: 1px 1px #0f1089; }
.dtitle svg { width: 21px; height: 21px; border: 1px solid #fff; border-radius: 3px; background: linear-gradient(135deg, #ef9578, #dc451d 50%, #c63510); }
.dbody { height: 101px; background: #ece9d8; }
.msg { display: flex; padding: 13px 0 0 15px; height: 69px; gap: 14px; }
.msg svg { width: 32px; height: 32px; }
.msg span { margin-top: 6px; }
.btns { display: flex; gap: 9px; padding-left: 222px; }
button { width: 85px; height: 20px; display: flex; justify-content: center; align-items: center; padding: 0; font-size: 12px; line-height: 14px; color: #000; border: 1px solid #003c74; border-radius: 3px; background: linear-gradient(#fff, #f2f1ea 80%, #d8d0c4); }
button.def { box-shadow: inset 0 0 0 2px #a9c3f0; outline: 1px dotted #222; outline-offset: -4px; }
```
